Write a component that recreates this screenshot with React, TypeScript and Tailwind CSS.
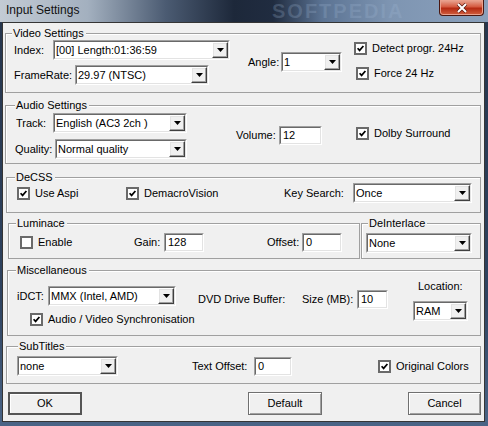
import React from "react";

const font = "font-['Liberation_Sans',Arial,sans-serif]";

function Arrow() {
  return (
    <div className="flex h-full w-[16px] shrink-0 items-center justify-center border border-t-white border-l-white border-r-[#404040] border-b-[#404040] bg-[#f0f0f0] shadow-[inset_-1px_-1px_0_#a0a0a0,inset_1px_1px_0_#e3e3e3]">
      <svg width="7" height="4" viewBox="0 0 7 4">
        <path d="M0 0H7L3.5 4Z" fill="#000" />
      </svg>
    </div>
  );
}

function Sunken({ cls, children }: { cls: string; children: React.ReactNode }) {
  return (
    <div className={`flex shrink-0 border border-t-[#a0a0a0] border-l-[#a0a0a0] border-b-white border-r-white ${cls}`}>
      <div className="flex min-w-0 flex-1 border border-t-[#696969] border-l-[#696969] border-b-[#e3e3e3] border-r-[#e3e3e3] bg-white">
        {children}
      </div>
    </div>
  );
}

function Combo({ w, value, cls = "" }: { w: string; value: string; cls?: string }) {
  return (
    <Sunken cls={`h-[20px] ${w} ${cls}`}>
      <span className="flex-1 truncate pl-[1px] leading-[16px]">{value}</span>
      <Arrow />
    </Sunken>
  );
}

function Edit({ w, value }: { w: string; value: string }) {
  return (
    <Sunken cls={`h-[19px] ${w}`}>
      <span className="pl-[2px] leading-[15px]">{value}</span>
    </Sunken>
  );
}

function Check({ label, checked = false, cls = "" }: { label: string; checked?: boolean; cls?: string }) {
  return (
    <div className={`flex shrink-0 items-center ${cls}`}>
      <div className="flex h-[13px] w-[13px] shrink-0 items-center justify-center border-2 border-[#6a6a6a] bg-white">
        {checked && (
          <svg width="9" height="9" viewBox="0 0 9 9">
            <path d="M1.6 4.2L3.6 6.4L7.4 2" fill="none" stroke="#000" strokeWidth="1.7" />
          </svg>
        )}
      </div>
      <span className="ml-[5px] whitespace-nowrap leading-[13px]">{label}</span>
    </div>
  );
}

function Group({ cls, legend, lcls, children }: { cls: string; legend: string; lcls: string; children: React.ReactNode }) {
  return (
    <div className={`relative shrink-0 border border-[#a0a0a0] shadow-[inset_1px_1px_0_#fff] ${cls}`}>
      <span className={`absolute top-[-7px] bg-[#f0f0f0] pl-[1px] pr-[2px] leading-[13px] ${lcls}`}>{legend}</span>
      <div className="flex items-start">{children}</div>
    </div>
  );
}

function Btn({ label, cls }: { label: string; cls: string }) {
  return <div className={`flex h-[23px] shrink-0 items-center justify-center bg-[#f0f0f0] ${cls}`}>{label}</div>;
}

function TitleBar() {
  return (
    <div className="relative flex h-[22px] shrink-0 items-start overflow-hidden bg-[linear-gradient(90deg,#c3cbd4_0%,#a3b0bf_18%,#4b5b72_34%,#1d283a_48%,#202c40_56%,#5b7393_66%,#7e95b2_80%,#8aa0bb_100%)]">
      <span className="absolute left-[272px] top-[1px] whitespace-nowrap text-[20px] font-bold leading-[20px] tracking-[2px] text-[#9fb6d3]/25">
        SOFTPEDIA
      </span>
      <span className="relative pl-[6px] pt-[2px] text-[12px] leading-[16px] text-[#111]">Input Settings</span>
      <div className="relative ml-auto mr-[4px] flex h-[16px] w-[45px] items-center justify-center rounded-b-[4px] border border-t-0 border-[#4a1710] bg-[linear-gradient(180deg,#e9a996_0%,#d55a40_45%,#b52a12_55%,#d0603f_100%)] shadow-[inset_0_0_0_1px_#eaa08c]">
        <svg width="12" height="10" viewBox="0 0 12 10">
          <path d="M2 1L10 9M10 1L2 9" stroke="#5a1a10" strokeWidth="3.4" />
          <path d="M2 1L10 9M10 1L2 9" stroke="#fff" strokeWidth="2" />
        </svg>
      </div>
    </div>
  );
}

export default function App() {
  return (
    <div className={`${font} flex h-[426px] w-[488px] flex-col overflow-hidden bg-[linear-gradient(180deg,#26354c_0%,#2f4360_70%,#4a6486_100%)] text-[11px] text-black`}>
      <TitleBar />
      <div className="ml-[2px] flex h-[400px] w-[483px] flex-col border border-[#353535] bg-[#f0f0f0]">
        <Group cls="ml-[2px] mt-[10px] h-[60px] w-[476px]" legend="Video Settings" lcls="left-[6px]">
          <div className="ml-[8px] mt-[6px] flex flex-col">
            <div className="flex items-center">
              <span className="w-[39px]">Index:</span>
              <Combo w="w-[177px]" value="[00] Length:01:36:59" />
            </div>
            <div className="mt-[5px] flex items-center">
              <span className="w-[61px]">FrameRate:</span>
              <Combo w="w-[134px]" value="29.97 (NTSC)" />
            </div>
          </div>
          <div className="ml-[18px] mt-[18px] flex items-center">
            <span className="w-[33px]">Angle:</span>
            <Combo w="w-[61px]" value="1" />
          </div>
          <div className="ml-[12px] mt-[8px] flex flex-col">
            <Check label="Detect progr. 24Hz" checked />
            <Check cls="ml-[2px] mt-[12px]" label="Force 24 Hz" checked />
          </div>
        </Group>

        <Group cls="ml-[2px] mt-[12px] h-[59px] w-[476px]" legend="Audio Settings" lcls="left-[9px]">
          <div className="mt-[7px] flex flex-col">
            <div className="ml-[10px] flex items-center">
              <span className="w-[37px]">Track:</span>
              <Combo w="w-[134px]" value="English (AC3 2ch )" />
            </div>
            <div className="ml-[9px] mt-[6px] flex items-center">
              <span className="w-[40px]">Quality:</span>
              <Combo w="w-[132px]" value="Normal quality" />
            </div>
          </div>
          <div className="ml-[49px] mt-[20px] flex items-center">
            <span className="w-[43px]">Volume:</span>
            <Edit w="w-[43px]" value="12" />
          </div>
          <Check cls="ml-[34px] mt-[21px]" label="Dolby Surround" checked />
        </Group>

        <Group cls="ml-[3px] mt-[13px] h-[36px] w-[475px]" legend="DeCSS" lcls="left-[8px]">
          <div className="mt-[5px] flex h-[20px] items-center">
            <Check cls="ml-[10px] w-[109px]" label="Use Aspi" checked />
            <Check cls="w-[158px]" label="DemacroVision" checked />
            <span className="w-[69px]">Key Search:</span>
            <Combo w="w-[119px]" value="Once" />
          </div>
        </Group>

        <div className="ml-[5px] mt-[10px] flex">
          <Group cls="h-[36px] w-[352px]" legend="Luminace" lcls="left-[7px]">
            <div className="mt-[9px] flex h-[19px] items-center">
              <Check cls="ml-[11px] w-[114px]" label="Enable" />
              <span className="w-[30px]">Gain:</span>
              <Edit w="w-[40px]" value="128" />
              <span className="ml-[63px] w-[35px]">Offset:</span>
              <Edit w="w-[40px]" value="0" />
            </div>
          </Group>
          <Group cls="ml-[1px] h-[36px] w-[120px]" legend="DeInterlace" lcls="left-[6px]">
            <Combo cls="ml-[4px] mt-[9px]" w="w-[106px]" value="None" />
          </Group>
        </div>

        <Group cls="ml-[4px] mt-[11px] h-[66px] w-[474px]" legend="Miscellaneous" lcls="left-[8px]">
          <div className="mt-[15px] flex w-[190px] flex-col">
            <div className="ml-[9px] flex items-center">
              <span className="w-[31px]">iDCT:</span>
              <Combo w="w-[128px]" value="MMX (Intel, AMD)" />
            </div>
            <Check cls="ml-[22px] mt-[7px]" label="Audio / Video Synchronisation" checked />
          </div>
          <div className="mt-[19px] flex items-center">
            <span className="w-[104px]">DVD Drive Buffer:</span>
            <span className="w-[55px]">Size (MB):</span>
            <Edit w="w-[31px]" value="10" />
          </div>
          <div className="ml-[25px] mt-[9px] flex flex-col">
            <span className="ml-[5px] leading-[13px]">Location:</span>
            <Combo cls="mt-[8px]" w="w-[55px]" value="RAM" />
          </div>
        </Group>

        <Group cls="ml-[3px] mt-[10px] h-[38px] w-[475px]" legend="SubTitles" lcls="left-[11px]">
          <div className="mt-[9px] flex h-[20px] items-center">
            <Combo cls="ml-[10px]" w="w-[101px]" value="none" />
            <span className="ml-[74px] w-[62px]">Text Offset:</span>
            <Edit w="w-[38px]" value="0" />
            <Check cls="ml-[86px]" label="Original Colors" checked />
          </div>
        </Group>

        <div className="mt-[8px] flex">
          <Btn label="OK" cls="ml-[5px] w-[74px] border-2 border-[#555] shadow-[inset_1px_1px_0_#fff]" />
          <Btn label="Default" cls="ml-[166px] w-[74px] border border-[#707070] shadow-[inset_1px_1px_0_#fff,inset_-1px_-1px_0_#a0a0a0]" />
          <Btn label="Cancel" cls="ml-[86px] w-[73px] border border-[#707070] shadow-[inset_1px_1px_0_#fff,inset_-1px_-1px_0_#a0a0a0]" />
        </div>
      </div>
    </div>
  );
}
